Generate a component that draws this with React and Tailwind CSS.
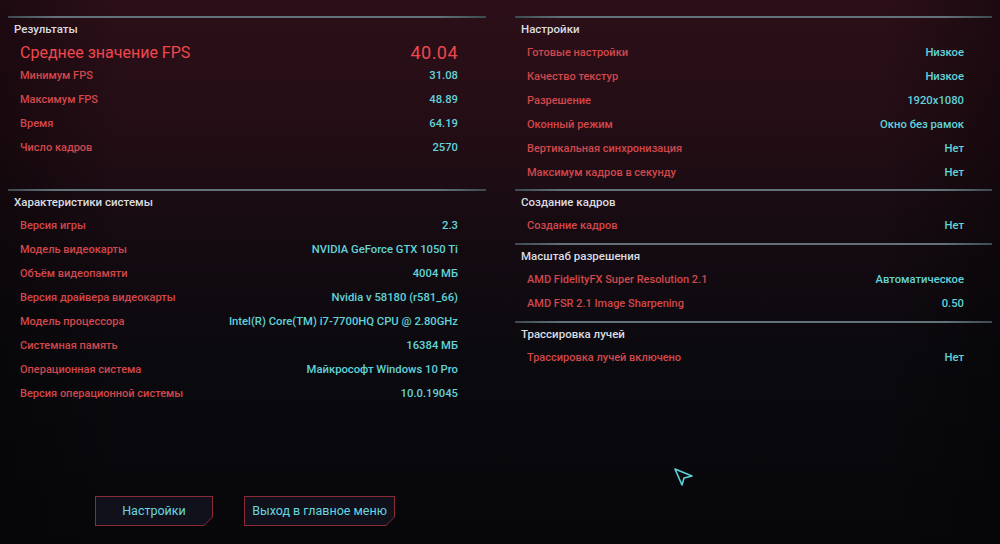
import React from "react";

const font = { fontFamily: "Roboto, 'Liberation Sans', sans-serif" };

function Line() {
  return <div className="h-[2px] bg-[linear-gradient(90deg,#3d4a52_0%,#63727a_10%,#63727a_90%,#3d4a52_100%)]" />;
}

function Header({ children }) {
  return (
    <div className="h-[22px] pt-[2px] flex items-center pl-[6px] text-[11.5px] font-medium text-[#d9dde0]">{children}</div>
  );
}

function Row({ label, value }) {
  return (
    <div className="h-6 pt-[2px] flex items-center justify-between pl-[12px] pr-[28px] whitespace-nowrap">
      <span className="text-[11px] font-medium text-[#d2474b]">{label}</span>
      <span className="text-[11.25px] font-medium text-[#62d3d9]">{value}</span>
    </div>
  );
}

function Button({ children, w }) {
  return (
    <div className={`${w} shrink-0 h-[30px] bg-[#8a2a36] p-px [clip-path:polygon(0_0,100%_0,100%_calc(100%-9px),calc(100%-9px)_100%,0_100%)]`}>
      <div className="w-full h-full bg-[#10111a] flex items-center justify-center whitespace-nowrap text-[12.5px] text-[#68d6e0] [clip-path:polygon(0_0,100%_0,100%_calc(100%-8px),calc(100%-8px)_100%,0_100%)]">
        {children}
      </div>
    </div>
  );
}

export default function App() {
  return (
    <div
      style={font}
      className="relative w-[1000px] h-[544px] overflow-hidden bg-[linear-gradient(90deg,rgba(0,0,0,0.35)_0%,rgba(0,0,0,0)_12%,rgba(0,0,0,0)_88%,rgba(0,0,0,0.35)_100%),linear-gradient(180deg,#2c0f19_0%,#230d15_25%,#140b11_45%,#0b0a0f_65%,#07070a_100%)]"
    >
      <div className="flex items-start pt-[16px] pl-[8px] gap-[29px]">
        {/* Left column */}
        <div className="w-[478px] flex flex-col">
          <Line />
          <Header>Результаты</Header>
          <div className="h-[23px] pt-[2px] flex items-center justify-between pl-[12px] pr-[28px]">
            <span className="text-[16px] text-[#f0474c]">Среднее значение FPS</span>
            <span className="text-[18px] text-[#f0474c] tracking-wide">40.04</span>
          </div>
          <Row label="Минимум FPS" value="31.08" />
          <Row label="Максимум FPS" value="48.89" />
          <Row label="Время" value="64.19" />
          <Row label="Число кадров" value="2570" />
          <div className="h-[30px]" />
          <Line />
          <Header>Характеристики системы</Header>
          <Row label="Версия игры" value="2.3" />
          <Row label="Модель видеокарты" value="NVIDIA GeForce GTX 1050 Ti" />
          <Row label="Объём видеопамяти" value="4004 МБ" />
          <Row label="Версия драйвера видеокарты" value="Nvidia v 58180 (r581_66)" />
          <Row label="Модель процессора" value="Intel(R) Core(TM) i7-7700HQ CPU @ 2.80GHz" />
          <Row label="Системная память" value="16384 МБ" />
          <Row label="Операционная система" value="Майкрософт Windows 10 Pro" />
          <Row label="Версия операционной системы" value="10.0.19045" />
        </div>

        {/* Right column */}
        <div className="w-[477px] flex flex-col">
          <Line />
          <Header>Настройки</Header>
          <Row label="Готовые настройки" value="Низкое" />
          <Row label="Качество текстур" value="Низкое" />
          <Row label="Разрешение" value="1920x1080" />
          <Row label="Оконный режим" value="Окно без рамок" />
          <Row label="Вертикальная синхронизация" value="Нет" />
          <Row label="Максимум кадров в секунду" value="Нет" />
          <div className="h-[5px]" />
          <Line />
          <Header>Создание кадров</Header>
          <Row label="Создание кадров" value="Нет" />
          <div className="h-[6px]" />
          <Line />
          <Header>Масштаб разрешения</Header>
          <Row label="AMD FidelityFX Super Resolution 2.1" value="Автоматическое" />
          <Row label="AMD FSR 2.1 Image Sharpening" value="0.50" />
          <div className="h-[6px]" />
          <Line />
          <Header>Трассировка лучей</Header>
          <Row label="Трассировка лучей включено" value="Нет" />
        </div>
      </div>

      <div className="flex gap-[31px] pl-[95px] mt-[91px]">
        <Button w="w-[118px]">Настройки</Button>
        <Button w="w-[151px]">Выход в главное меню</Button>
      </div>

      <svg className="absolute left-[670px] top-[464px]" width="28" height="28" viewBox="0 0 28 28">
        <polygon points="5,5 22,12 14,14 12,21" fill="none" stroke="#5fd3db" strokeWidth="1.6" strokeLinejoin="round" />
      </svg>
    </div>
  );
}
